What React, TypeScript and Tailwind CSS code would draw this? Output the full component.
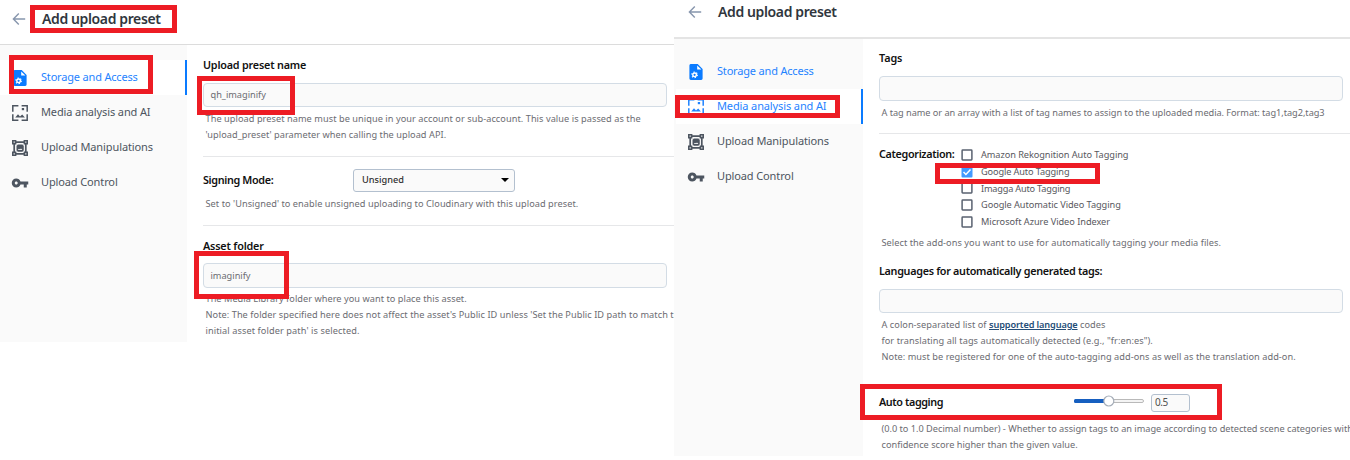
import type { ReactNode } from "react";
import { MdVpnKey } from "react-icons/md";

function BackArrow() {
  return (
    <svg viewBox="0 0 14 14" className="h-[14px] w-[14px] shrink-0" fill="none" stroke="#8796ad" strokeWidth="1.4">
      <path d="M13.2 7H1.6M6.8 1.6 1.4 7l5.4 5.4" />
    </svg>
  );
}

function StorageIcon() {
  return (
    <svg viewBox="0 0 16 16" className="h-4 w-4">
      <path d="M2.6 0H9.7L14.6 5V14.6A1.4 1.4 0 0 1 13.2 16H2.8A1.4 1.4 0 0 1 1.4 14.6V1.4A1.4 1.4 0 0 1 2.6 0Z" fill="#0a7bff" />
      <path d="M9.2 1.4V5.6H13.4Z" fill="#fff" />
      <circle cx="6.6" cy="10.8" r="1.8" fill="none" stroke="#fff" strokeWidth="1.4" />
      <circle cx="6.6" cy="10.8" r="2.8" fill="none" stroke="#fff" strokeWidth="1.1" strokeDasharray="1.3 1.63" />
    </svg>
  );
}

function MediaIcon() {
  return (
    <svg viewBox="0 0 16 16" className="h-4 w-4">
      <path d="M.8 6.7V.8H6.4M9.6.8H15.2V6.7M15.2 9.3V15.2H9.6M6.4 15.2H.8V9.3" fill="none" stroke="currentColor" strokeWidth="1.5" />
      <path d="M3.2 12.6 6 9.2l2 2.2L10.2 9.4l2.7 3.2Z" fill="currentColor" />
      <rect x="9.8" y="3" width="2.3" height="2.2" fill="currentColor" />
    </svg>
  );
}

function ManipulationIcon() {
  return (
    <svg viewBox="0 0 16 16" className="h-4 w-4" fill="none" stroke="currentColor">
      <path d="M4 2.2H12M4 13.8H12M2.2 4V12M13.8 4V12" strokeWidth="1.7" />
      <path d="M.8.8H3.6V3.6H.8ZM12.4.8H15.2V3.6H12.4ZM.8 12.4H3.6V15.2H.8ZM12.4 12.4H15.2V15.2H12.4Z" strokeWidth="1.6" />
      <rect x="5" y="5" width="6.2" height="6.2" rx="1" fill="currentColor" strokeWidth="1" />
      <path d="M5.8 10 7 8.7l1 .9 1-1.1 1.4 1.5Z" fill="#fafafa" stroke="none" />
    </svg>
  );
}

const navItems = [
  { label: "Storage and Access", icon: <StorageIcon />, tracking: "tracking-[-0.18px]" },
  { label: "Media analysis and AI", icon: <MediaIcon />, tracking: "tracking-[-0.12px]" },
  { label: "Upload Manipulations", icon: <ManipulationIcon />, tracking: "tracking-[-0.1px]" },
  { label: "Upload Control", icon: <MdVpnKey className="h-[18px] w-[18px] shrink-0" />, tracking: "tracking-[-0.12px]" },
];

function Sidebar({ active, className }: { active: number; className: string }) {
  return (
    <nav className={`shrink-0 bg-[#fafafa] text-[11px] ${className}`}>
      {navItems.map((item, i) => (
        <div
          key={item.label}
          className={`flex h-[35px] items-center gap-[13px] pl-3 ${
            i === active ? "border-r-2 border-[#0a7bff] bg-white text-[#1f83ff]" : i === 0 ? "text-[#1f83ff]" : "text-[#4d5560]"
          }`}
        >
          <span className="flex w-4 justify-center">{item.icon}</span>
          <span className={`whitespace-nowrap ${item.tracking}`}>{item.label}</span>
        </div>
      ))}
    </nav>
  );
}

function Title() {
  return <h1 className="text-[14px] leading-5 font-semibold tracking-[-0.38px] text-[#30363d]">Add upload preset</h1>;
}

function Heading({ children, className = "" }: { children: ReactNode; className?: string }) {
  return <div className={`h-4 text-[10.8px] leading-4 font-semibold whitespace-nowrap text-[#111] ${className}`}>{children}</div>;
}

function Note({ children, className = "tracking-[0.055px]" }: { children: ReactNode; className?: string }) {
  return <div className={`h-4 pl-[2.5px] text-[9.2px] leading-4 whitespace-nowrap text-[#6c6c72] ${className}`}>{children}</div>;
}

function Field({ value, className = "" }: { value?: string; className?: string }) {
  return (
    <div className={`flex w-[464px] items-center rounded border border-[#d3dce5] bg-[#fafafa] pl-[6.5px] text-[9.2px] text-[#6c6c72] ${className}`}>
      {value && <span>{value}</span>}
    </div>
  );
}

function Option({ label, checked, className = "" }: { label: string; checked?: boolean; className?: string }) {
  return (
    <div className="flex h-[16.8px] items-center gap-[8px] text-[9.2px] whitespace-nowrap text-[#58585e]">
      <svg viewBox="0 0 12 12" className="h-3 w-3">
        {checked ? (
          <>
            <rect x=".5" y=".5" width="11" height="11" rx="1" fill="#429aff" />
            <path d="M2.5 6 4.9 8.5 9.5 3.5" fill="none" stroke="#fff" strokeWidth="1.5" />
          </>
        ) : (
          <rect x="1.1" y="1.1" width="9.8" height="9.8" rx=".6" fill="#fff" stroke="#596270" strokeWidth="1.5" />
        )}
      </svg>
      <span className={className}>{label}</span>
    </div>
  );
}

function Outline({ className }: { className: string }) {
  return <div className={`pointer-events-none absolute border-5 border-[#ed1c24] ${className}`} />;
}

export default function App() {
  return (
    <div className="relative flex h-[460px] w-[1350px] overflow-hidden bg-white font-['Noto_Sans',sans-serif]">
      <section className="flex h-[342px] w-[674px] shrink-0 flex-col overflow-hidden">
        <header className="flex h-[45px] shrink-0 items-start gap-4 border-b border-[#dcdcdc] pt-[9px] pl-3">
          <span className="pt-[3px]"><BackArrow /></span>
          <Title />
        </header>
        <div className="flex min-h-0 flex-1">
          <Sidebar active={0} className="w-[187px] pt-[15px]" />
          <main className="w-[487px] shrink-0 overflow-hidden pt-3 pl-4">
            <Heading className="tracking-[-0.2px]">Upload preset name</Heading>
            <Field value="qh_imaginify" className="mt-[10px] h-6" />
            <Note className="mt-1 tracking-[0.055px]">The upload preset name must be unique in your account or sub-account. This value is passed as the</Note>
            <Note className="tracking-[0.04px]">'upload_preset' parameter when calling the upload API.</Note>
            <div className="mt-[13px] h-px bg-[#e6e7e9]" />
            <div className="mt-[12px] flex h-[22px] items-center">
              <Heading className="w-[150px] tracking-[-0.35px]">Signing Mode:</Heading>
              <div className="flex h-[23px] w-[162px] items-center justify-between rounded-[3px] border border-[#b3c0cf] bg-[#fafafa] pr-[5px] pl-2 text-[9.2px] font-medium text-[#303030]">
                <span>Unsigned</span>
                <svg viewBox="0 0 8 4" className="h-1 w-2"><path d="M0 0H8L4 4Z" fill="#000" /></svg>
              </div>
            </div>
            <Note className="mt-[5px] tracking-[0.05px]">Set to 'Unsigned' to enable unsigned uploading to Cloudinary with this upload preset.</Note>
            <div className="mt-[13px] h-px bg-[#e6e7e9]" />
            <Heading className="mt-[12px] tracking-[-0.18px]">Asset folder</Heading>
            <Field value="imaginify" className="mt-[9px] h-[25px]" />
            <Note className="mt-[3px] tracking-[0.04px]">The Media Library folder where you want to place this asset.</Note>
            <Note className="tracking-[0.055px]">Note: The folder specified here does not affect the asset's Public ID unless 'Set the Public ID path to match the</Note>
            <Note className="tracking-[0.09px]">initial asset folder path' is selected.</Note>
          </main>
        </div>
      </section>

      <section className="flex h-[456px] w-[676px] shrink-0 flex-col overflow-hidden">
        <header className="flex h-[39px] shrink-0 items-start gap-4 border-b-2 border-[#e4e4e4] pt-[2px] pl-[14px]">
          <span className="pt-[3px]"><BackArrow /></span>
          <Title />
        </header>
        <div className="flex min-h-0 flex-1">
          <Sidebar active={1} className="w-[189px] pt-[15px] pl-[2px]" />
          <main className="w-[487px] shrink-0 overflow-hidden pt-[11px] pl-4">
            <Heading className="tracking-[-0.1px]">Tags</Heading>
            <Field className="mt-[10px] h-[25px]" />
            <Note className="mt-1 tracking-[-0.04px]">A tag name or an array with a list of tag names to assign to the uploaded media. Format: tag1,tag2,tag3</Note>
            <div className="mt-3 h-px bg-[#e6e7e9]" />
            <div className="mt-[12px] flex">
              <Heading className="w-[82px] tracking-[-0.34px]">Categorization:</Heading>
              <div className="pt-[0.5px]">
                <Option label="Amazon Rekognition Auto Tagging" className="tracking-[-0.06px]" />
                <Option label="Google Auto Tagging" checked className="tracking-[-0.12px]" />
                <Option label="Imagga Auto Tagging" className="tracking-[-0.2px]" />
                <Option label="Google Automatic Video Tagging" className="tracking-[-0.05px]" />
                <Option label="Microsoft Azure Video Indexer" className="tracking-[-0.03px]" />
              </div>
            </div>
            <Note className="mt-[4.5px] tracking-[0.05px]">Select the add-ons you want to use for automatically tagging your media files.</Note>
            <Heading className="mt-[12px] tracking-[-0.31px]">Languages for automatically generated tags:</Heading>
            <Field className="mt-[10px] h-6" />
            <Note className="mt-1 tracking-[0.04px]">
              A colon-separated list of <a className="font-semibold tracking-[-0.12px] text-[#244d77] underline">supported language</a> codes
            </Note>
            <Note className="tracking-[0.075px]">for translating all tags automatically detected (e.g., "fr:en:es").</Note>
            <Note className="tracking-[0.05px]">Note: must be registered for one of the auto-tagging add-ons as well as the translation add-on.</Note>
            <div className="mt-[29px] flex h-[18px] items-center">
              <Heading className="-mt-px w-[195px] tracking-[-0.4px]">Auto tagging</Heading>
              <svg viewBox="0 0 70 14" className="mb-[3px] h-[14px] w-[70px]">
                <rect x=".5" y="5.5" width="69" height="3" rx="1.5" fill="#f4f4f4" stroke="#b9b9b9" />
                <rect y="5" width="35" height="4" rx="1.5" fill="#165fc0" />
                <circle cx="34.8" cy="7" r="5" fill="#fff" stroke="#a5adb8" strokeWidth="1.2" />
              </svg>
              <div className="ml-[7px] flex h-[18px] w-[39px] items-center rounded-[3px] border border-[#b3c0cf] bg-[#fafafa] pl-[3px] text-[10px] tracking-[-0.4px] text-[#505050]">
                0.5
              </div>
            </div>
            <Note className="mt-[9px] tracking-[-0.01px]">(0.0 to 1.0 Decimal number) - Whether to assign tags to an image according to detected scene categories with</Note>
            <Note className="tracking-normal">confidence score higher than the given value.</Note>
          </main>
        </div>
      </section>

      <Outline className="top-[5px] left-[30px] h-7 w-[147px]" />
      <Outline className="top-[55px] left-[9px] h-[39px] w-[144px]" />
      <Outline className="top-[76px] left-[197px] h-[39px] w-[98px]" />
      <Outline className="top-[251px] left-[194px] h-12 w-[95px]" />
      <Outline className="top-[95px] left-[675px] h-[23px] w-[165px]" />
      <Outline className="top-[163px] left-[935px] h-[21px] w-[165px]" />
      <Outline className="top-[384px] left-[860px] h-9 w-[362px]" />
    </div>
  );
}
